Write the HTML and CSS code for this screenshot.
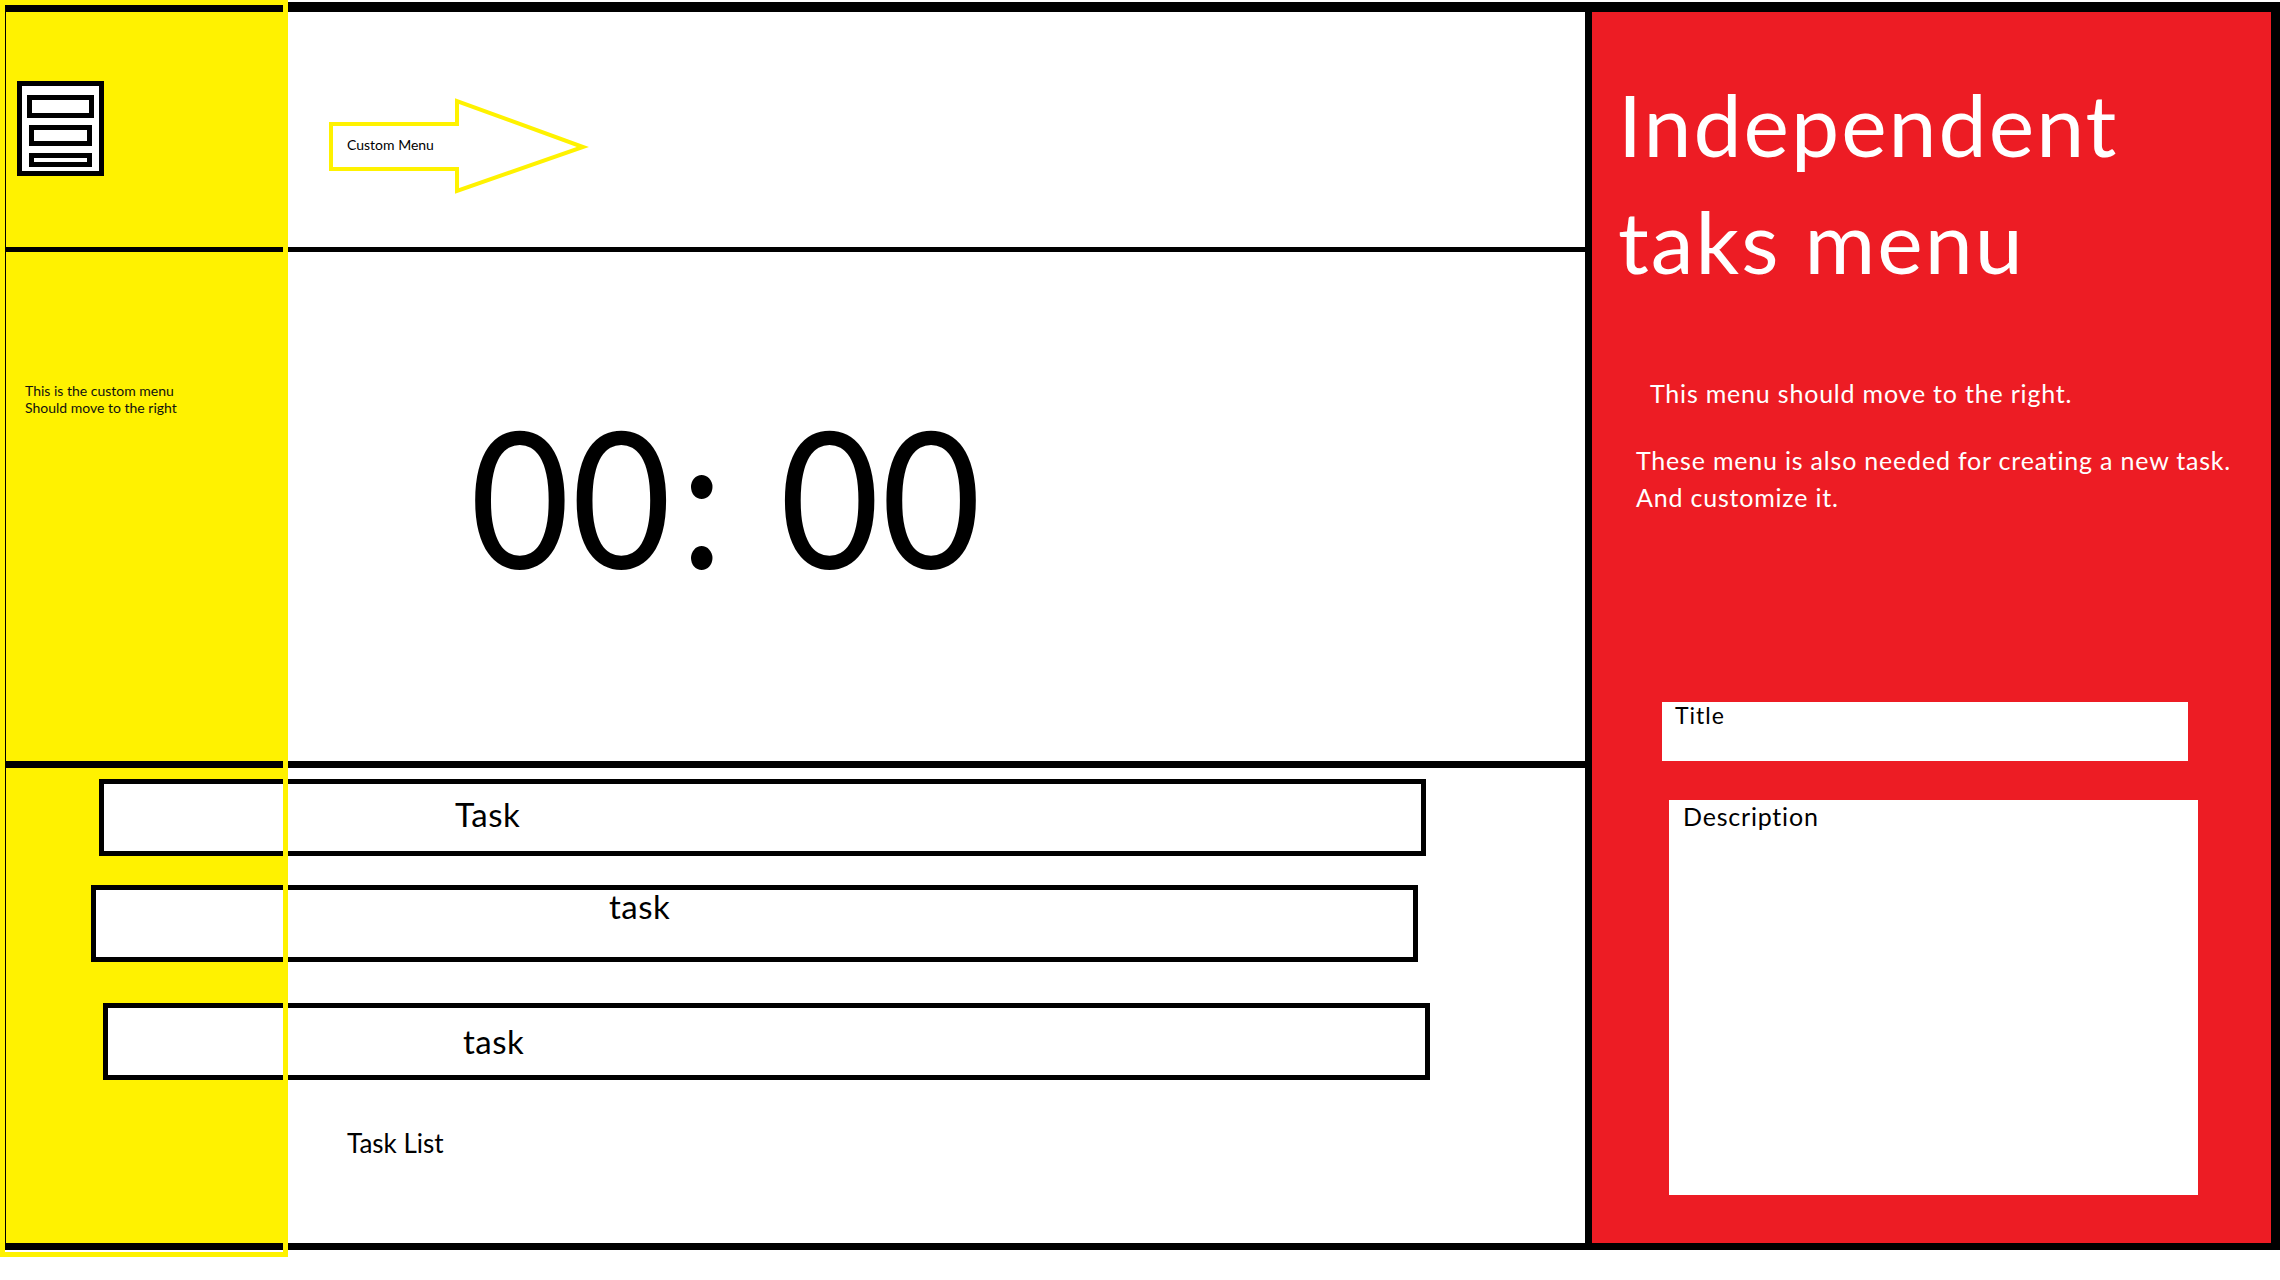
FILE: index.html
```html
<!DOCTYPE html>
<html lang="en">
<head>
<meta charset="utf-8">
<title>Task timer mockup</title>
<link rel="stylesheet" href="styles.css">
</head>
<body>
<div class="frame">
  <div class="main">
    <header class="header">
      <svg class="menu-icon" width="87" height="95" viewBox="0 0 87 95">
        <rect x="2.5" y="2.5" width="82" height="90" fill="#fff" stroke="#000" stroke-width="5"/>
        <rect x="12.5" y="16.5" width="62" height="18" fill="#fff" stroke="#000" stroke-width="5"/>
        <rect x="14.5" y="46.5" width="58" height="16" fill="#fff" stroke="#000" stroke-width="5"/>
        <rect x="14.5" y="74.5" width="58" height="9" fill="#fff" stroke="#000" stroke-width="5"/>
      </svg>
      <div class="arrow">
        <svg width="260" height="98" viewBox="0 0 260 98">
          <polygon points="2,27 128,27 128,4 254,50 128,94 128,72 2,72" fill="#fff" stroke="#fff200" stroke-width="4" stroke-linejoin="miter"/>
        </svg>
        <span class="arrow-label">Custom Menu</span>
      </div>
    </header>
    <section class="timer-row">
      <p class="side-note">This is the custom menu<br>Should move to the right</p>
      <div class="timer">00<span class="colon">:</span> 00</div>
    </section>
    <section class="tasks">
      <div class="task task-1"><span>Task</span></div>
      <div class="task task-2"><span>task</span></div>
      <div class="task task-3"><span>task</span></div>
      <div class="task-list">Task List</div>
    </section>
  </div>
  <aside class="panel">
    <h1 class="panel-title">Independent<br>taks menu</h1>
    <p class="panel-p1">This menu should move to the right.</p>
    <p class="panel-p2">These menu is also needed for creating a new task.<br>And customize it.</p>
    <div class="field field-title">Title</div>
    <div class="field field-desc">Description</div>
  </aside>
</div>
<div class="yellow-outline"></div>
</body>
</html>
```

FILE: styles.css
```css
html, body {
  margin: 0;
  padding: 0;
}
body {
  position: relative;
  width: 2280px;
  height: 1280px;
  background: #fff;
  font-family: "Lato", "Open Sans", sans-serif;
  color: #000;
  overflow: hidden;
}
.frame {
  box-sizing: border-box;
  margin-top: 2px;
  height: 1248px;
  display: grid;
  grid-template-columns: 1579px 1fr;
  border-top: 10px solid #000;
  border-left: 6px solid #000;
  border-right: 9px solid #000;
  border-bottom: 7px solid #000;
}
.main {
  display: flex;
  flex-direction: column;
  background: linear-gradient(90deg, #fff200 0, #fff200 277px, #fff 277px);
}
.header {
  box-sizing: border-box;
  height: 240px;
  border-bottom: 5px solid #000;
  display: flex;
  align-items: flex-start;
}
.menu-icon {
  display: block;
  margin-left: 11px;
  margin-top: 69px;
}
.arrow {
  position: relative;
  margin-left: 225px;
  margin-top: 85px;
  width: 260px;
  height: 98px;
}
.arrow svg {
  display: block;
}
.arrow-label {
  position: absolute;
  left: 18px;
  top: 39px;
  font-size: 14px;
  line-height: 17px;
  white-space: nowrap;
}
.timer-row {
  box-sizing: border-box;
  height: 516px;
  border-bottom: 7px solid #000;
  display: flex;
  align-items: flex-start;
}
.side-note {
  margin: 130px 0 0 19px;
  width: 258px;
  font-size: 14px;
  line-height: 17px;
  color: #111;
}
.timer {
  margin-top: 148px;
  margin-left: 187px;
  font-size: 191px;
  line-height: 1;
  letter-spacing: 2px;
  word-spacing: 10px;
  white-space: pre;
  transform: scaleX(0.9);
  transform-origin: left top;
}
.colon {
  margin-left: 8px;
}
.tasks {
  flex: 1;
  display: flex;
  flex-direction: column;
  align-items: flex-start;
  padding-top: 11px;
}
.task {
  box-sizing: border-box;
  width: 1327px;
  height: 77px;
  border: 5px solid #000;
  background: #fff;
  font-size: 33px;
  line-height: 30px;
  letter-spacing: 0.5px;
}
.task span {
  display: block;
  white-space: nowrap;
}
.task-1 { margin-left: 93px; }
.task-1 span { padding: 15px 0 0 351px; }
.task-2 { margin-left: 85px; margin-top: 29px; }
.task-2 span { padding: 1px 0 0 513px; }
.task-3 { margin-left: 97px; margin-top: 41px; }
.task-3 span { padding: 18px 0 0 355px; }
.task-list {
  margin: 48px 0 0 341px;
  font-size: 26px;
  line-height: 30px;
}
.panel {
  border-left: 7px solid #000;
  background: #ed1c24;
  color: #fff;
  padding: 53px 0 0 26px;
  min-width: 0;
}
.panel-title {
  margin: 0;
  font-weight: 400;
  font-size: 86px;
  line-height: 117px;
  letter-spacing: 2px;
  white-space: nowrap;
}
.panel-p1 {
  margin: 76px 0 0 32px;
  font-size: 25px;
  line-height: 37px;
  letter-spacing: 0.8px;
  white-space: nowrap;
}
.panel-p2 {
  margin: 30px 0 0 18px;
  font-size: 25px;
  line-height: 37px;
  letter-spacing: 0.8px;
  white-space: nowrap;
}
.field {
  background: #fff;
  color: #000;
  box-sizing: border-box;
}
.field-title {
  margin: 186px 0 0 44px;
  width: 526px;
  height: 59px;
  font-size: 23px;
  line-height: 26px;
  letter-spacing: 1px;
  padding: 0 0 0 13px;
}
.field-desc {
  margin: 39px 0 0 51px;
  width: 529px;
  height: 395px;
  font-size: 25px;
  line-height: 28px;
  letter-spacing: 0.8px;
  padding: 2px 0 0 14px;
}
.yellow-outline {
  position: absolute;
  left: 0;
  top: 0;
  width: 288px;
  height: 1257px;
  box-sizing: border-box;
  border: 5px solid #fff200;
  pointer-events: none;
}
```
